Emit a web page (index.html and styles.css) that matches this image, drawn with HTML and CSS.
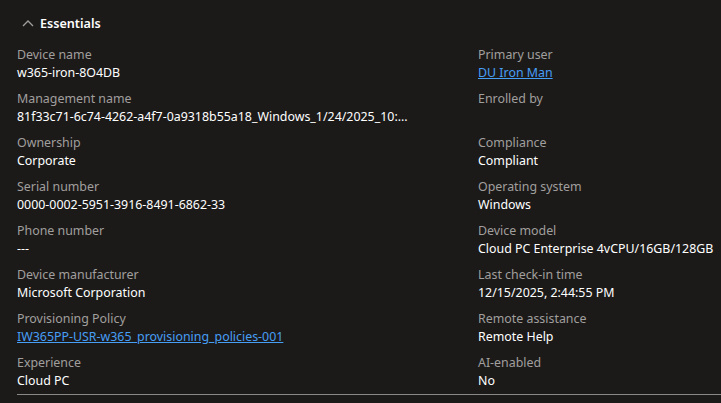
FILE: index.html
```html
<!DOCTYPE html>
<html>
<head>
<meta charset="utf-8">
<link rel="stylesheet" href="styles.css">
</head>
<body>
<section class="essentials">
  <div class="header">
    <svg class="chev" width="12" height="8" viewBox="0 0 12 8"><path d="M1 7 L6 2 L11 7" fill="none" stroke="#a19f9d" stroke-width="1.3"/></svg>
    <span class="title">Essentials</span>
  </div>
  <div class="grid">
    <div class="col left">
      <div class="item"><div class="label">Device name</div><div class="value">w365-iron-8O4DB</div></div>
      <div class="item"><div class="label">Management name</div><div class="value">81f33c71-6c74-4262-a4f7-0a9318b55a18_Windows_1/24/2025_10:...</div></div>
      <div class="item"><div class="label">Ownership</div><div class="value">Corporate</div></div>
      <div class="item"><div class="label">Serial number</div><div class="value">0000-0002-5951-3916-8491-6862-33</div></div>
      <div class="item"><div class="label">Phone number</div><div class="value">---</div></div>
      <div class="item"><div class="label">Device manufacturer</div><div class="value">Microsoft Corporation</div></div>
      <div class="item"><div class="label">Provisioning Policy</div><div class="value"><a class="link" href="#">IW365PP-USR-w365_provisioning_policies-001</a></div></div>
      <div class="item"><div class="label">Experience</div><div class="value">Cloud PC</div></div>
    </div>
    <div class="col right">
      <div class="item"><div class="label">Primary user</div><div class="value"><a class="link" href="#">DU Iron Man</a></div></div>
      <div class="item"><div class="label">Enrolled by</div><div class="value"></div></div>
      <div class="item"><div class="label">Compliance</div><div class="value">Compliant</div></div>
      <div class="item"><div class="label">Operating system</div><div class="value">Windows</div></div>
      <div class="item"><div class="label">Device model</div><div class="value">Cloud PC Enterprise 4vCPU/16GB/128GB</div></div>
      <div class="item"><div class="label">Last check-in time</div><div class="value">12/15/2025, 2:44:55 PM</div></div>
      <div class="item"><div class="label">Remote assistance</div><div class="value">Remote Help</div></div>
      <div class="item"><div class="label">AI-enabled</div><div class="value">No</div></div>
    </div>
  </div>
  <div class="divider"></div>
</section>
</body>
</html>
```
FILE: styles.css
```css
html, body {
  margin: 0;
  padding: 0;
  background: #1b1a19;
  width: 721px;
  height: 403px;
  overflow: hidden;
}
body {
  font-family: "Noto Sans", "Open Sans", sans-serif;
  font-size: 12.4px;
  color: #ffffff;
}
.essentials {
  padding: 13px 0 0 17px;
}
.header {
  display: flex;
  align-items: center;
  gap: 6px;
  height: 20px;
  padding-left: 5px;
}
.chev { display: block; }
.title {
  font-weight: 600;
  font-size: 12.6px;
  color: #ffffff;
}
.grid {
  display: grid;
  grid-template-columns: 461px 1fr;
  margin-top: 13px;
}
.col {
  display: flex;
  flex-direction: column;
  gap: 8px;
}
.item {
  display: flex;
  flex-direction: column;
}
.label {
  color: #a19f9d;
  height: 18px;
  line-height: 18px;
  white-space: nowrap;
}
.value {
  height: 18px;
  line-height: 18px;
  white-space: nowrap;
  color: #ffffff;
}
.link {
  color: #479ef5;
  text-decoration: underline;
}
.divider {
  margin-top: 4px;
  height: 1px;
  background: #8a8886;
}
```
